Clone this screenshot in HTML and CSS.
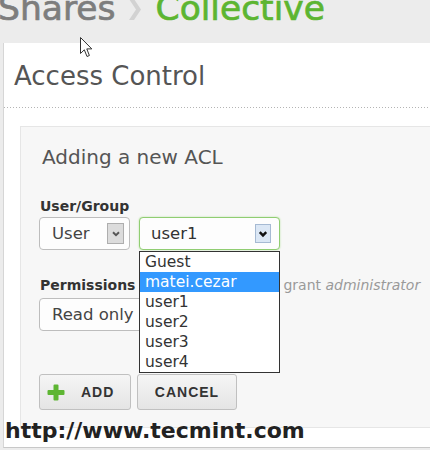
FILE: index.html
```html
<!DOCTYPE html>
<html lang="en">
<head>
<meta charset="utf-8">
<title>Access Control</title>
<link rel="stylesheet" href="styles.css">
</head>
<body>
<header class="crumbs">
  <div class="crumbs-row">
    <span class="crumb-parent">Shares</span><svg class="crumb-sep" viewBox="0 0 12 21" aria-hidden="true"><polygon points="0,0 5,0 12,10.5 5,21 0,21 7,10.5" fill="#d2d2d2"/></svg><span class="crumb-current">Collective</span>
  </div>
</header>

<svg class="cursor" viewBox="0 0 13 21" aria-hidden="true"><path d="M0.5 0.5 L0.5 16.5 L4.3 12.8 L7 19.5 L9.4 18.5 L6.8 11.9 L11.8 11.9 Z" fill="#fff" stroke="#333" stroke-width="1"/></svg>

<main class="panel">
  <h1 class="panel-title">Access Control</h1>
  <div class="dots"></div>

  <section class="acl-box">
    <h2 class="acl-title">Adding a new ACL</h2>

    <div class="field-label">User/Group</div>
    <div class="select-row">
      <div class="select select-type">
        <span>User</span>
        <span class="select-btn"><svg viewBox="0 0 10 10"><polyline points="2.5,3.5 5,6 7.5,3.5" fill="none" stroke="#555" stroke-width="1.6"/></svg></span>
      </div>
      <div class="select-wrap">
        <div class="select select-user">
          <span>user1</span>
          <span class="select-btn select-btn-blue"><svg viewBox="0 0 10 10"><polyline points="2.3,3.4 5,6.2 7.7,3.4" fill="none" stroke="#111" stroke-width="2"/></svg></span>
        </div>
        <ul class="dropdown">
          <li>Guest</li>
          <li class="is-active">matei.cezar</li>
          <li>user1</li>
          <li>user2</li>
          <li>user3</li>
          <li>user4</li>
        </ul>
      </div>
    </div>

    <div class="field-label perm-row">
      <span>Permissions</span>
      <span class="hint">grant <em>administrator</em></span>
    </div>
    <div class="select select-perm"><span>Read only</span></div>

    <div class="actions">
      <button class="btn btn-add" type="button"><svg class="plus" viewBox="0 0 18 17" aria-hidden="true"><path d="M6.5 1.5 Q6.5 0.5 7.5 0.5 L10.5 0.5 Q11.5 0.5 11.5 1.5 L11.5 6 L16.5 6 Q17.5 6 17.5 7 L17.5 10 Q17.5 11 16.5 11 L11.5 11 L11.5 15.5 Q11.5 16.5 10.5 16.5 L7.5 16.5 Q6.5 16.5 6.5 15.5 L6.5 11 L1.5 11 Q0.5 11 0.5 10 L0.5 7 Q0.5 6 1.5 6 L6.5 6 Z" fill="#5db532"/></svg><span>ADD</span></button>
      <button class="btn btn-cancel" type="button">CANCEL</button>
    </div>
  </section>
</main>

<div class="watermark">http://www.tecmint.com</div>
</body>
</html>
```

FILE: styles.css
```css
* { box-sizing: border-box; }

html, body {
  margin: 0;
  padding: 0;
}

body {
  background: #ececec;
  font-family: "DejaVu Sans", Verdana, sans-serif;
  color: #444;
  width: 430px;
  height: 450px;
  overflow: hidden;
  position: relative;
}

/* breadcrumb header */
.crumbs {
  height: 43px;
  overflow: hidden;
  white-space: nowrap;
  font-size: 34.5px;
  line-height: 34px;
}

.crumbs-row {
  margin-top: -9px;
  margin-left: -2px;
}

.crumb-parent {
  color: #7d7d7d;
  -webkit-text-stroke: 0.7px #7d7d7d;
}

.crumb-sep {
  display: inline-block;
  width: 12px;
  height: 21px;
  margin: 0 15px 0 13px;
  vertical-align: baseline;
}

.crumb-current {
  color: #5cb531;
  -webkit-text-stroke: 0.7px #5cb531;
}

.cursor {
  position: absolute;
  left: 80px;
  top: 37px;
  width: 13px;
  height: 21px;
}

/* main panel */
.panel {
  margin-left: 3px;
  background: #fff;
  border-left: 1px solid #d6d6d6;
  border-bottom: 1px solid #c8c8c8;
  padding: 17px 0 19px 0;
  overflow: hidden;
}

.panel-title {
  margin: 0;
  padding-left: 10px;
  font-size: 26px;
  line-height: 32px;
  font-weight: normal;
  color: #555;
}

.dots {
  margin-top: 15px;
  height: 1px;
  background: repeating-linear-gradient(to right, #b4b4b4 0 1px, transparent 1px 3px);
}

.acl-box {
  margin: 18px -10px 0 16px;
  background: #f7f7f7;
  border: 1px solid #e6e6e6;
  padding: 18px 0 17px 18px;
}

.acl-title {
  margin: 0;
  padding-left: 3px;
  font-size: 20px;
  line-height: 24px;
  font-weight: normal;
  color: #555;
}

.field-label {
  margin-top: 28px;
  padding-left: 1px;
  font-size: 14px;
  line-height: 18px;
  font-weight: bold;
  color: #333;
}

.perm-row {
  display: flex;
  margin-top: 26px;
}

.hint {
  margin-left: 148px;
  font-weight: normal;
  color: #9a9a9a;
}

.hint em {
  font-style: italic;
}

/* fake selects */
.select-row {
  display: flex;
  gap: 9px;
  margin-top: 2px;
}

.select {
  display: flex;
  align-items: center;
  justify-content: space-between;
  height: 33px;
  background: #fdfdfd;
  border: 1px solid #bdbdbd;
  border-radius: 4px;
  font-size: 16.5px;
  color: #444;
  padding-left: 12px;
}

.select-type {
  width: 91px;
  padding-right: 5px;
}

.select-btn {
  display: flex;
  align-items: center;
  justify-content: center;
  width: 17px;
  height: 21px;
  background: #dcdcdc;
  border: 1px solid #aeaeae;
}

.select-btn svg {
  width: 12px;
  height: 12px;
}

.select-wrap {
  position: relative;
}

.select-user {
  width: 141px;
  padding-left: 11px;
  padding-right: 8px;
  border-color: #90cd72;
  box-shadow: 0 0 2px #b4e09c;
  color: #333;
}

.select-btn-blue {
  width: 16px;
  height: 19px;
  background: #dbe7f5;
  border-color: #a6bad3;
}

.dropdown {
  position: absolute;
  top: 34px;
  left: 0;
  z-index: 2;
  width: 141px;
  margin: 0;
  padding: 0;
  list-style: none;
  background: #fff;
  border: 1px solid #333;
  font-size: 15.5px;
  line-height: 20px;
  color: #333;
}

.dropdown li {
  padding-left: 5px;
}

.dropdown .is-active {
  background: #3399ff;
  color: #fff;
}

.select-perm {
  width: 140px;
  margin-top: 4px;
}

/* buttons */
.actions {
  display: flex;
  gap: 6px;
  margin-top: 43px;
}

.btn {
  display: flex;
  align-items: center;
  justify-content: center;
  height: 36px;
  margin: 0;
  padding: 0;
  background: linear-gradient(#f5f5f5, #e4e4e4);
  border: 1px solid #c0c0c0;
  border-radius: 3px;
  font-family: "Liberation Sans", Arial, sans-serif;
  font-size: 14px;
  font-weight: bold;
  letter-spacing: 1px;
  color: #333;
}

.btn-add {
  width: 92px;
  justify-content: flex-start;
  padding-left: 7px;
  gap: 16px;
}

.plus {
  width: 18px;
  height: 17px;
}

.btn-cancel {
  width: 100px;
}

/* watermark overlay */
.watermark {
  position: absolute;
  left: 5px;
  top: 420px;
  font-family: "DejaVu Sans", Verdana, sans-serif;
  font-size: 22px;
  line-height: 22px;
  font-weight: bold;
  color: #222;
  white-space: nowrap;
}
```
